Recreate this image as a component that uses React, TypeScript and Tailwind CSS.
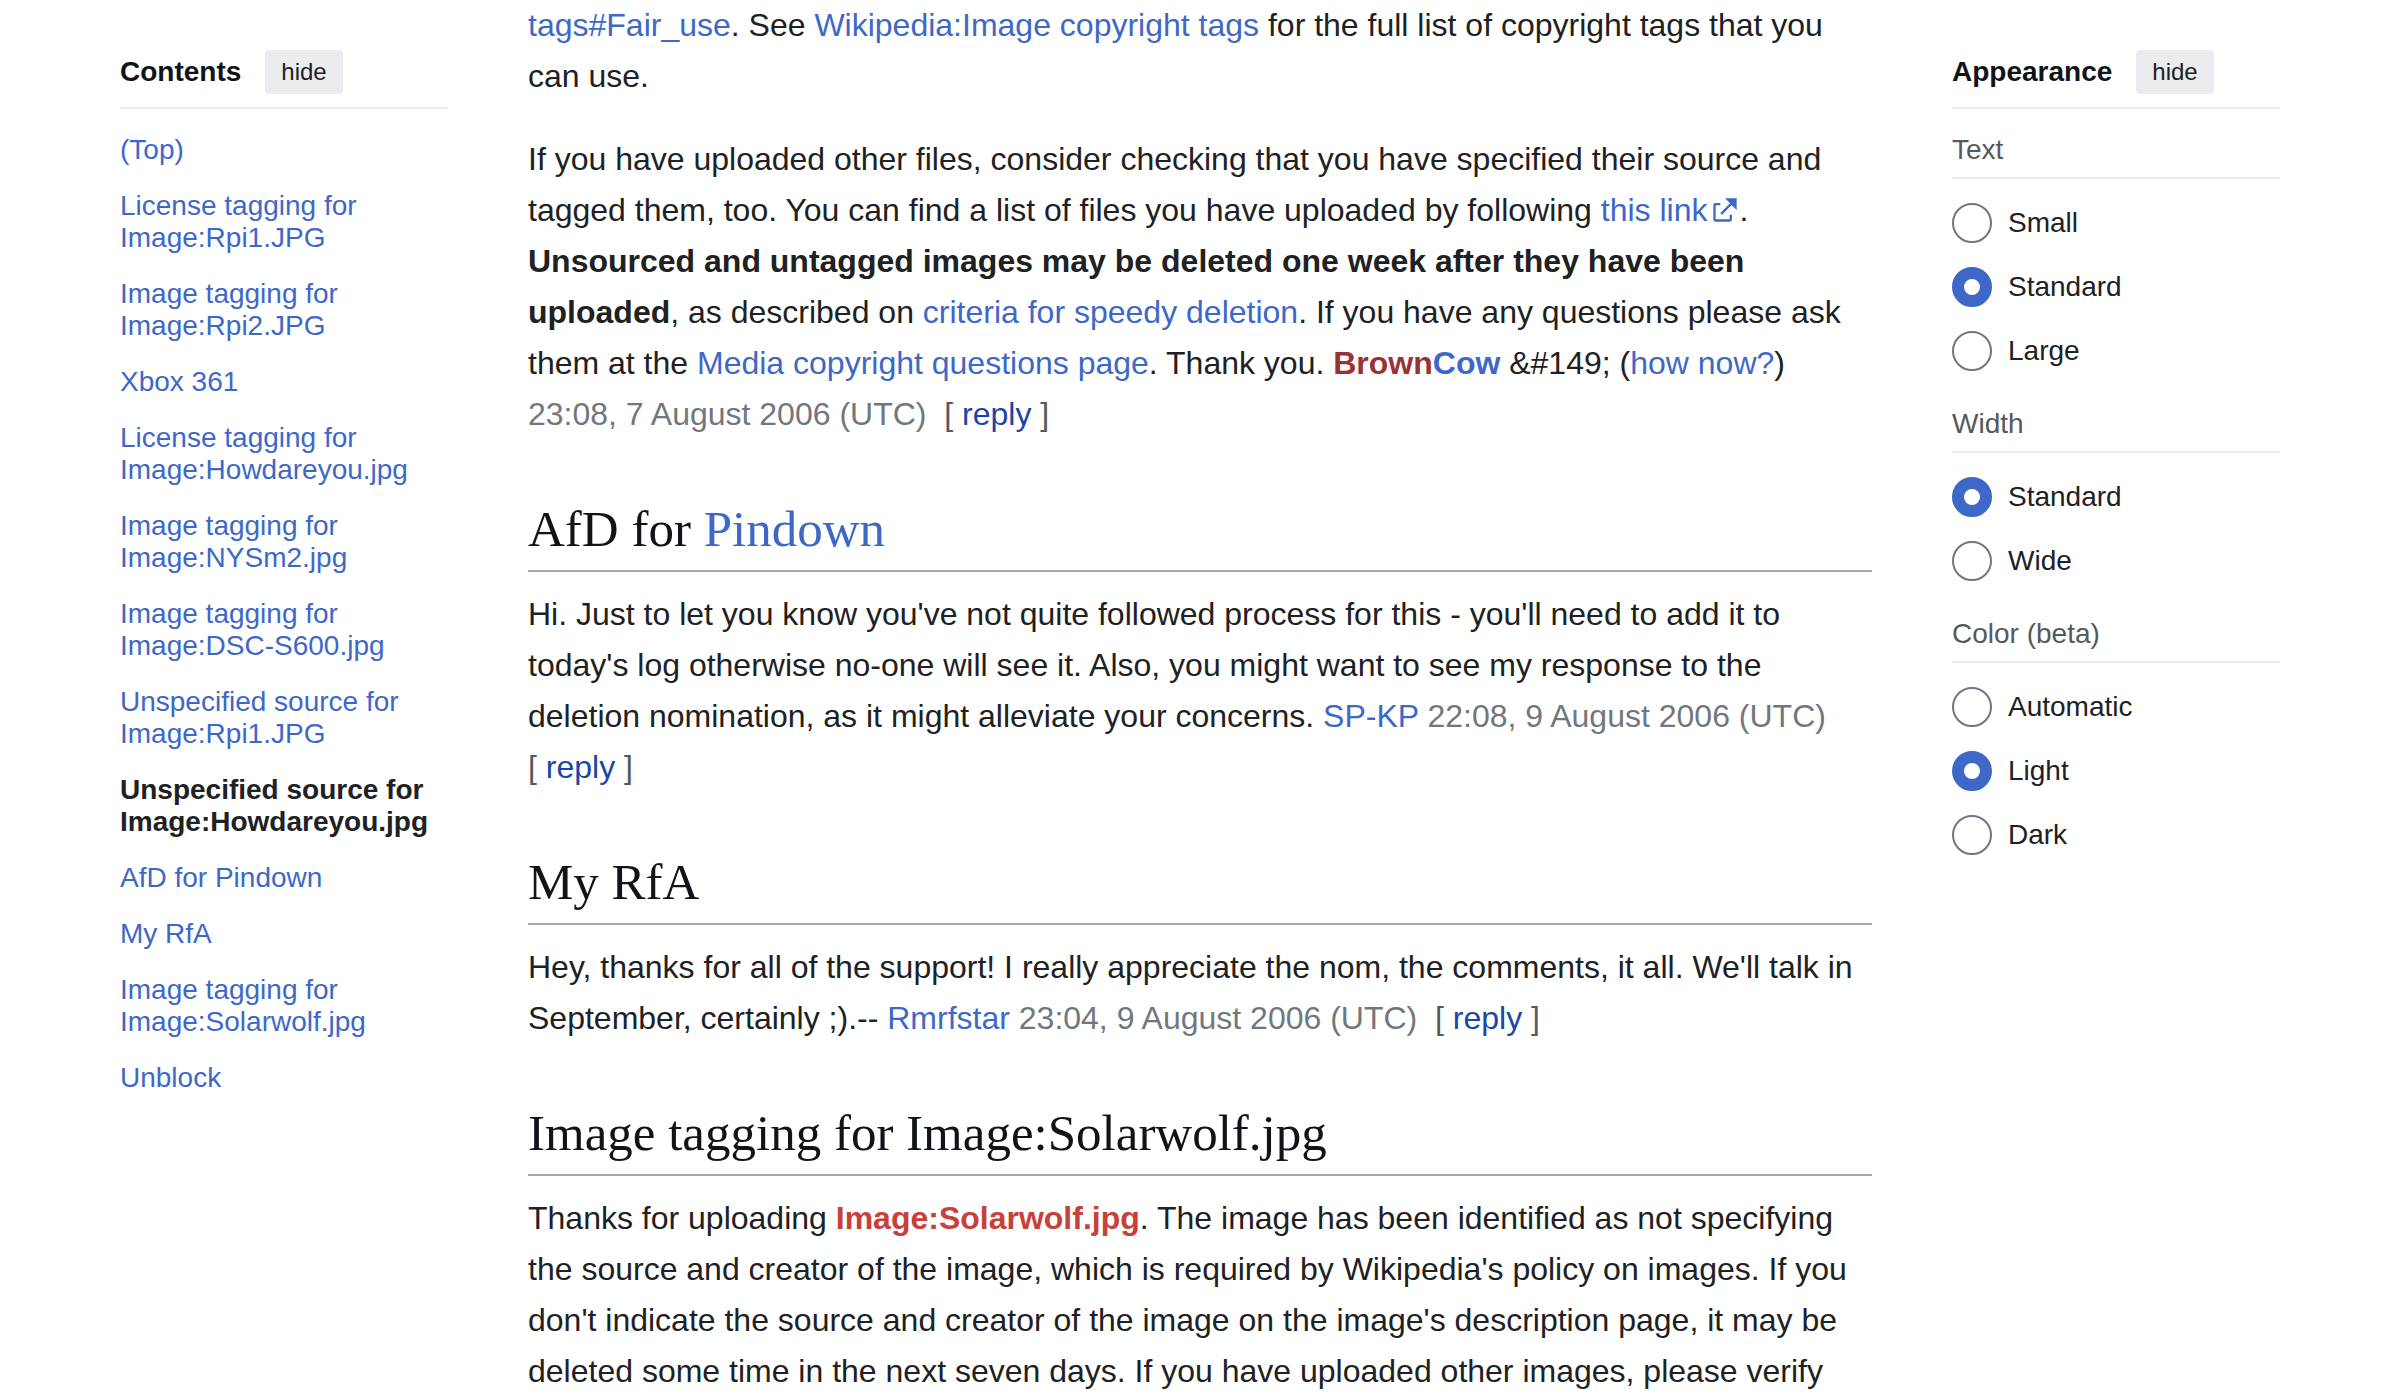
import { useState, type ReactNode } from "react";

const contents = [
  "(Top)",
  "License tagging for Image:Rpi1.JPG",
  "Image tagging for Image:Rpi2.JPG",
  "Xbox 361",
  "License tagging for Image:Howdareyou.jpg",
  "Image tagging for Image:NYSm2.jpg",
  "Image tagging for Image:DSC-S600.jpg",
  "Unspecified source for Image:Rpi1.JPG",
  "Unspecified source for Image:Howdareyou.jpg",
  "AfD for Pindown",
  "My RfA",
  "Image tagging for Image:Solarwolf.jpg",
  "Unblock",
];

const preferences = [
  { name: "Text", options: ["Small", "Standard", "Large"], initial: "Standard" },
  { name: "Width", options: ["Standard", "Wide"], initial: "Standard" },
  { name: "Color (beta)", options: ["Automatic", "Light", "Dark"], initial: "Light" },
];

function A({ children, className = "text-[#3e68c8]" }: { children: ReactNode; className?: string }) {
  return (
    <a href="#" className={`hover:underline ${className}`}>
      {children}
    </a>
  );
}

function PanelHeader({ title }: { title: string }) {
  return (
    <div className="flex items-center gap-6 border-b-2 border-[#eaecf0] pb-[13px]">
      <h2 className="font-bold text-[#101418]">{title}</h2>
      <button type="button" className="h-11 rounded-sm bg-[#eaecf0] px-4 text-2xl">
        hide
      </button>
    </div>
  );
}

function Contents() {
  return (
    <nav aria-label="Contents" className="pt-[50px] text-[28px] leading-8">
      <PanelHeader title="Contents" />
      <ul className="flex flex-col gap-6 pt-[25px]">
        {contents.map((item, i) => (
          <li key={item}>
            <A className={i === 8 ? "font-bold text-[#202122]" : "text-[#3e68c8]"}>{item}</A>
          </li>
        ))}
      </ul>
    </nav>
  );
}

function Preference({ name, options, initial }: { name: string; options: string[]; initial: string }) {
  const [value, setValue] = useState(initial);
  return (
    <section role="radiogroup" aria-label={name}>
      <h3 className="border-b-2 border-[#eaecf0] pb-[11px] text-[#54595d]">{name}</h3>
      <div className="flex flex-col gap-6 pt-6">
        {options.map((option) => (
          <label key={option} className="flex items-center gap-4">
            <input
              type="radio"
              name={name}
              checked={value === option}
              onChange={() => setValue(option)}
              className="size-10 shrink-0 appearance-none rounded-full border-2 border-[#72777d] bg-white checked:border-12 checked:border-[#3e68c8]"
            />
            {option}
          </label>
        ))}
      </div>
    </section>
  );
}

function Appearance() {
  return (
    <aside className="pt-[50px] text-[28px] leading-8">
      <PanelHeader title="Appearance" />
      <div className="flex flex-col gap-[37px] pt-[25px]">
        {preferences.map((p) => (
          <Preference key={p.name} {...p} />
        ))}
      </div>
    </aside>
  );
}

function ExternalIcon() {
  return (
    <svg viewBox="0 0 12 12" aria-hidden="true" className="ml-1 inline size-7 align-[-3px]" fill="currentColor">
      <path d="M6 1h5v5L8.86 3.85 4.7 8 4 7.3l4.15-4.16zM2 3h2v1H2v6h6V8h1v2a1 1 0 0 1-1 1H2a1 1 0 0 1-1-1V4a1 1 0 0 1 1-1" />
    </svg>
  );
}

function Heading({ children }: { children: ReactNode }) {
  return (
    <h2 className="mt-14 mb-[17px] border-b-2 border-[#a2a9b1] pb-2 font-['Liberation_Serif',serif] text-[51px] leading-[66px] text-[#101418]">
      {children}
    </h2>
  );
}

function Timestamp({ children }: { children: ReactNode }) {
  return (
    <>
      <span className="text-[#72777d]">{children}</span>
      {"\u00a0 "}
      <span className="whitespace-nowrap text-[#54595d]">
        [{"\u00a0"}
        <button type="button" className="text-[#1b46a8]">
          reply
        </button>
        {"\u00a0"}]
      </span>
    </>
  );
}

export default function App() {
  return (
    <div className="grid min-h-screen grid-cols-[328px_minmax(0,1fr)_328px] gap-20 bg-white px-[120px] font-['Liberation_Sans',Arial,sans-serif] text-[#202122]">
      <Contents />
      <main className="text-[32px] leading-[51px]">
        <p>
          <A>tags#Fair_use</A>. See <A>Wikipedia:Image copyright tags</A> for the full list of copyright tags that you
          can use.
        </p>
        <p className="mt-8">
          If you have uploaded other files, consider checking that you have specified their source and tagged them,
          too. You can find a list of files you have uploaded by following{" "}
          <A>
            this link
            <ExternalIcon />
          </A>
          . <b>Unsourced and untagged images may be deleted one week after they have been uploaded</b>, as described
          on <A>criteria for speedy deletion</A>. If you have any questions please ask them at the{" "}
          <A>Media copyright questions page</A>. Thank you.{" "}
          <b>
            <A className="text-[#993333]">Brown</A>
            <A>Cow</A>
          </b>{" "}
          {"&#149;"} (<A>how now?</A>) <Timestamp>23:08, 7 August 2006 (UTC)</Timestamp>
        </p>

        <Heading>
          AfD for <A>Pindown</A>
        </Heading>
        <p>
          Hi. Just to let you know you've not quite followed process for this - you'll need to add it to today's log
          otherwise no-one will see it. Also, you might want to see my response to the deletion nomination, as it might
          alleviate your concerns. <A>SP-KP</A> <Timestamp>22:08, 9 August 2006 (UTC)</Timestamp>
        </p>

        <Heading>My RfA</Heading>
        <p>
          Hey, thanks for all of the support! I really appreciate the nom, the comments, it all. We'll talk in
          September, certainly ;).-- <A>Rmrfstar</A> <Timestamp>23:04, 9 August 2006 (UTC)</Timestamp>
        </p>

        <Heading>Image tagging for Image:Solarwolf.jpg</Heading>
        <p>
          Thanks for uploading{" "}
          <b>
            <A className="text-[#c8403a]">Image:Solarwolf.jpg</A>
          </b>
          . The image has been identified as not specifying the source and creator of the image, which is required by
          Wikipedia's policy on images. If you don't indicate the source and creator of the image on the image's
          description page, it may be deleted some time in the next seven days. If you have uploaded other images,
          please verify
        </p>
      </main>
      <Appearance />
    </div>
  );
}
